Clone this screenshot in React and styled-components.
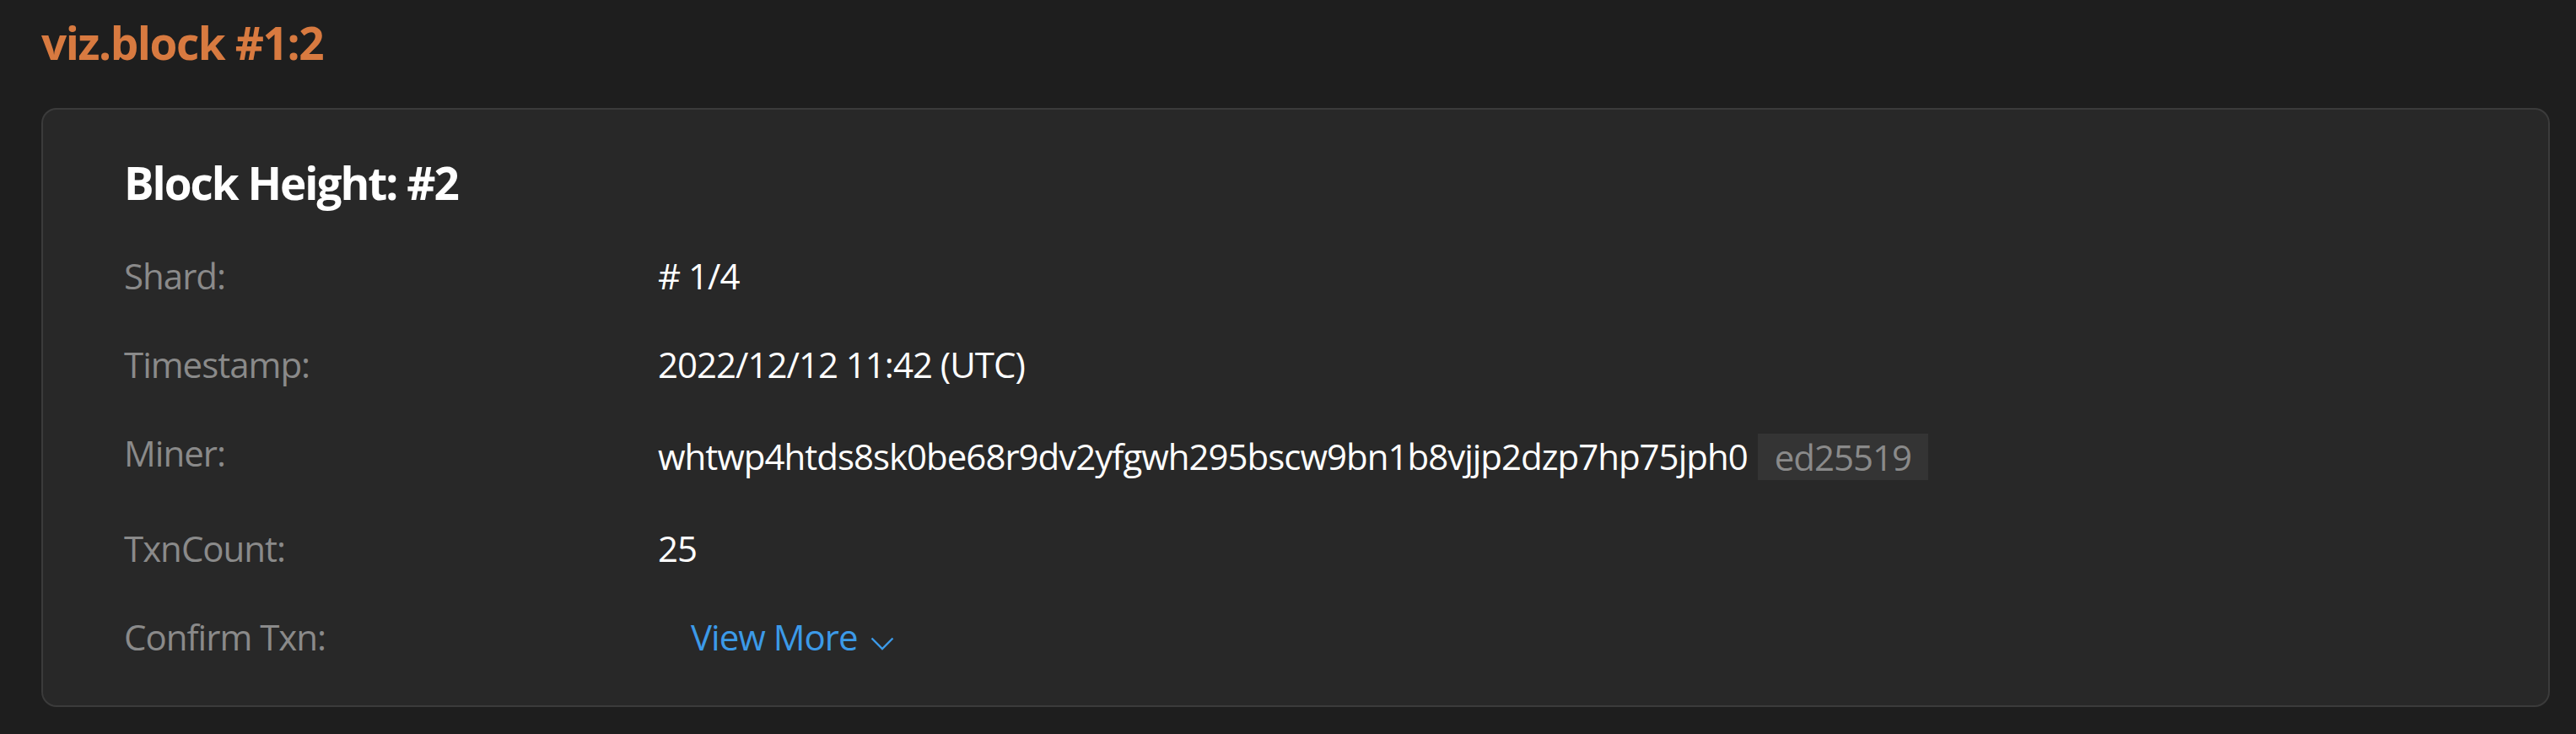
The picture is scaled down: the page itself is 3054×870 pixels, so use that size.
import React from "react";
import styled, { createGlobalStyle } from "styled-components";

const GlobalStyle = createGlobalStyle`
    html, body {
        margin: 0;
        padding: 0;
        background: #1e1e1e;
    }
    body {
        font-family: "Open Sans", "Noto Sans", sans-serif;
    }
`;

const Page = styled.div`
    box-sizing: border-box;
    width: 100%;
    min-height: 870px;
    padding: 24px 31px 0 49px;
    background: #1e1e1e;
`;

const PageTitle = styled.h2`
    margin: 0 0 51px;
    font-size: 53px;
    line-height: 53px;
    font-weight: 700;
    letter-spacing: -1.4px;
    color: #d87a40;
`;

const Card = styled.div`
    box-sizing: border-box;
    border: 2px solid #3b3b3b;
    border-radius: 18px;
    background: #282828;
    padding: 60px 96px 49px;
`;

const CardTitle = styled.h3`
    margin: 0 0 52px;
    font-size: 53px;
    line-height: 53px;
    font-weight: 700;
    letter-spacing: -2px;
    color: #ffffff;
`;

const List = styled.div`
    display: flex;
    flex-direction: column;
    gap: 41px;
`;

const Row = styled.div`
    display: flex;
    align-items: flex-start;
    min-height: ${props => (props.$tall ? "72px" : "64px")};
    font-size: 42px;
    line-height: 64px;
    letter-spacing: -1px;
`;

const Label = styled.div`
    flex: 0 0 633px;
    color: #8a8a8a;
`;

const Value = styled.div`
    flex: 1;
    padding-top: ${props => (props.$shift ? "4px" : "0")};
    color: #ffffff;
    white-space: nowrap;
`;

const Badge = styled.span`
    display: inline-block;
    margin-left: 12px;
    padding: 0 20px;
    height: 55px;
    line-height: 55px;
    background: #343434;
    color: #8a8a8a;
    vertical-align: -1px;
`;

const MoreLink = styled.span`
    display: inline-flex;
    align-items: baseline;
    gap: 16px;
    padding-left: 39px;
    color: #3c9ae8;
    cursor: pointer;
`;

const Chevron = () => (
    <svg width="28" height="16" viewBox="0 0 28 16" fill="none">
        <polyline
            points="1.5,1.5 14,14 26.5,1.5"
            stroke="#3c9ae8"
            strokeWidth="2.4"
        />
    </svg>
);

const block = {
    shard: "# 1/4",
    timestamp: "2022/12/12 11:42 (UTC)",
    miner: "whtwp4htds8sk0be68r9dv2yfgwh295bscw9bn1b8vjjp2dzp7hp75jph0",
    algo: "ed25519",
    txnCount: 25
};

export default function App() {
    return (
        <>
            <GlobalStyle />
            <Page>
                <PageTitle>viz.block #1:2</PageTitle>
                <Card>
                    <CardTitle>Block Height: #2</CardTitle>
                    <List>
                        <Row>
                            <Label>Shard:</Label>
                            <Value>{block.shard}</Value>
                        </Row>
                        <Row>
                            <Label>Timestamp:</Label>
                            <Value>{block.timestamp}</Value>
                        </Row>
                        <Row $tall>
                            <Label>Miner:</Label>
                            <Value $shift>
                                {block.miner}
                                <Badge>{block.algo}</Badge>
                            </Value>
                        </Row>
                        <Row>
                            <Label>TxnCount:</Label>
                            <Value>{block.txnCount}</Value>
                        </Row>
                        <Row>
                            <Label>Confirm Txn:</Label>
                            <Value>
                                <MoreLink>
                                    View More
                                    <Chevron />
                                </MoreLink>
                            </Value>
                        </Row>
                    </List>
                </Card>
            </Page>
        </>
    );
}
